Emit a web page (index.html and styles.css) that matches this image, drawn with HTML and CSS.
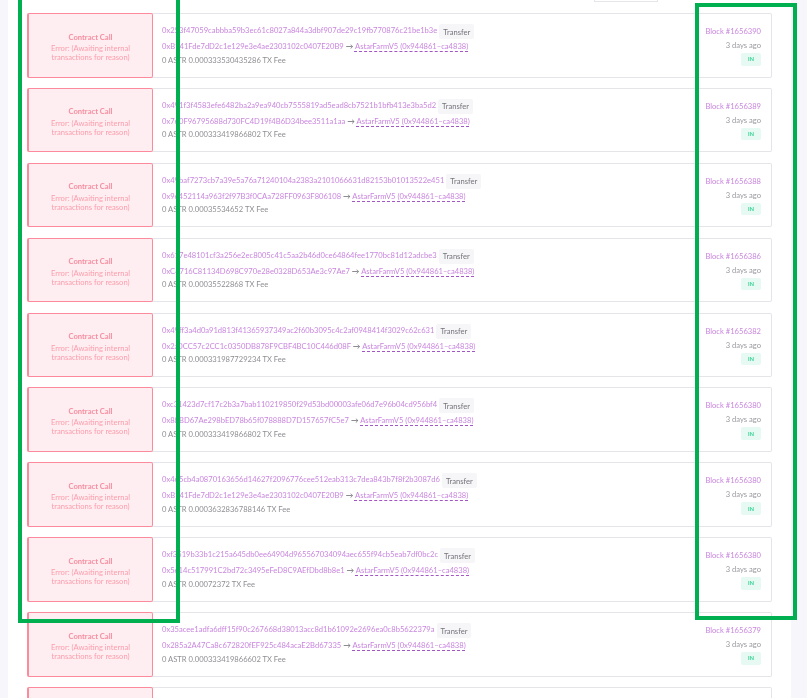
FILE: index.html
```html
<!DOCTYPE html>
<html lang="en">
<head>
<meta charset="utf-8">
<title>Transactions</title>
<link rel="stylesheet" href="styles.css">
</head>
<body>
<main class="page">
  <div class="toolbar"><div class="pager"></div></div>
  <section class="list">
    <article class="card">
      <div class="status"><div class="status-title">Contract Call</div><div class="status-error">Error: (Awaiting internal transactions for reason)</div></div>
      <div class="details">
        <div class="hash-row"><span class="link hash">0x253f47059cabbba59b3ec61c8027a844a3dbf907de29c19fb770876c21be1b3e</span><span class="tag">Transfer</span></div>
        <div class="address-row"><span class="link">0xB141Fde7dD2c1e129e3e4ae2303102c0407E20B9</span> <span class="arrow">→</span> <span class="link contract">AstarFarmV5 (0x944861–ca4838)</span></div>
        <div class="fee">0 ASTR 0.000333530435286 TX Fee</div>
      </div>
      <div class="meta"><div class="link block">Block #1656390</div><div class="age">3 days ago</div><div class="dir">IN</div></div>
    </article>
    <article class="card">
      <div class="status"><div class="status-title">Contract Call</div><div class="status-error">Error: (Awaiting internal transactions for reason)</div></div>
      <div class="details">
        <div class="hash-row"><span class="link hash">0x491f3f4583efe6482ba2a9ea940cb7555819ad5ead8cb7521b1bfb413e3ba5d2</span><span class="tag">Transfer</span></div>
        <div class="address-row"><span class="link">0x760F96795688d730FC4D19f4B6D34bee3511a1aa</span> <span class="arrow">→</span> <span class="link contract">AstarFarmV5 (0x944861–ca4838)</span></div>
        <div class="fee">0 ASTR 0.000333419866802 TX Fee</div>
      </div>
      <div class="meta"><div class="link block">Block #1656389</div><div class="age">3 days ago</div><div class="dir">IN</div></div>
    </article>
    <article class="card">
      <div class="status"><div class="status-title">Contract Call</div><div class="status-error">Error: (Awaiting internal transactions for reason)</div></div>
      <div class="details">
        <div class="hash-row"><span class="link hash">0x49baf7273cb7a39e5a76a71240104a2383a2101066631d82153b01013522e451</span><span class="tag">Transfer</span></div>
        <div class="address-row"><span class="link">0x9e452114a963f2f97B3f0CAa728FF0963F806108</span> <span class="arrow">→</span> <span class="link contract">AstarFarmV5 (0x944861–ca4838)</span></div>
        <div class="fee">0 ASTR 0.00035534652 TX Fee</div>
      </div>
      <div class="meta"><div class="link block">Block #1656388</div><div class="age">3 days ago</div><div class="dir">IN</div></div>
    </article>
    <article class="card">
      <div class="status"><div class="status-title">Contract Call</div><div class="status-error">Error: (Awaiting internal transactions for reason)</div></div>
      <div class="details">
        <div class="hash-row"><span class="link hash">0x617e48101cf3a256e2ec8005c41c5aa2b46d0ce64864fee1770bc81d12adcbe3</span><span class="tag">Transfer</span></div>
        <div class="address-row"><span class="link">0xC4716C81134D698C970e28e0328D653Ae3c97Ae7</span> <span class="arrow">→</span> <span class="link contract">AstarFarmV5 (0x944861–ca4838)</span></div>
        <div class="fee">0 ASTR 0.00035522868 TX Fee</div>
      </div>
      <div class="meta"><div class="link block">Block #1656386</div><div class="age">3 days ago</div><div class="dir">IN</div></div>
    </article>
    <article class="card">
      <div class="status"><div class="status-title">Contract Call</div><div class="status-error">Error: (Awaiting internal transactions for reason)</div></div>
      <div class="details">
        <div class="hash-row"><span class="link hash">0x49ff3a4d0a91d813f41365937349ac2f60b3095c4c2af0948414f3029c62c631</span><span class="tag">Transfer</span></div>
        <div class="address-row"><span class="link">0x2a0CC57c2CC1c0350DB878F9CBF4BC10C446d08F</span> <span class="arrow">→</span> <span class="link contract">AstarFarmV5 (0x944861–ca4838)</span></div>
        <div class="fee">0 ASTR 0.000331987729234 TX Fee</div>
      </div>
      <div class="meta"><div class="link block">Block #1656382</div><div class="age">3 days ago</div><div class="dir">IN</div></div>
    </article>
    <article class="card">
      <div class="status"><div class="status-title">Contract Call</div><div class="status-error">Error: (Awaiting internal transactions for reason)</div></div>
      <div class="details">
        <div class="hash-row"><span class="link hash">0xc31423d7cf17c2b3a7bab110219850f29d53bd00003afe06d7e96b04cd956bf4</span><span class="tag">Transfer</span></div>
        <div class="address-row"><span class="link">0x88BD67Ae298bED78b65f078888D7D157657fC5e7</span> <span class="arrow">→</span> <span class="link contract">AstarFarmV5 (0x944861–ca4838)</span></div>
        <div class="fee">0 ASTR 0.000333419866802 TX Fee</div>
      </div>
      <div class="meta"><div class="link block">Block #1656380</div><div class="age">3 days ago</div><div class="dir">IN</div></div>
    </article>
    <article class="card">
      <div class="status"><div class="status-title">Contract Call</div><div class="status-error">Error: (Awaiting internal transactions for reason)</div></div>
      <div class="details">
        <div class="hash-row"><span class="link hash">0x465cb4a0870163656d14627f2096776cee512eab313c7dea843b7f8f2b3087d6</span><span class="tag">Transfer</span></div>
        <div class="address-row"><span class="link">0xB141Fde7dD2c1e129e3e4ae2303102c0407E20B9</span> <span class="arrow">→</span> <span class="link contract">AstarFarmV5 (0x944861–ca4838)</span></div>
        <div class="fee">0 ASTR 0.0003632836788146 TX Fee</div>
      </div>
      <div class="meta"><div class="link block">Block #1656380</div><div class="age">3 days ago</div><div class="dir">IN</div></div>
    </article>
    <article class="card">
      <div class="status"><div class="status-title">Contract Call</div><div class="status-error">Error: (Awaiting internal transactions for reason)</div></div>
      <div class="details">
        <div class="hash-row"><span class="link hash">0xf3519b33b1c215a645db0ee64904d965567034094aec655f94cb5eab7df0bc2c</span><span class="tag">Transfer</span></div>
        <div class="address-row"><span class="link">0x5e14c517991C2bd72c3495eFeD8C9AEfDbd8b8e1</span> <span class="arrow">→</span> <span class="link contract">AstarFarmV5 (0x944861–ca4838)</span></div>
        <div class="fee">0 ASTR 0.00072372 TX Fee</div>
      </div>
      <div class="meta"><div class="link block">Block #1656380</div><div class="age">3 days ago</div><div class="dir">IN</div></div>
    </article>
    <article class="card">
      <div class="status"><div class="status-title">Contract Call</div><div class="status-error">Error: (Awaiting internal transactions for reason)</div></div>
      <div class="details">
        <div class="hash-row"><span class="link hash">0x35acee1adfa6dff15f90c267668d38013acc8d1b61092e2696ea0c8b5622379a</span><span class="tag">Transfer</span></div>
        <div class="address-row"><span class="link">0x285a2A47Ca8c672820fEF925c484acaE2Bd67335</span> <span class="arrow">→</span> <span class="link contract">AstarFarmV5 (0x944861–ca4838)</span></div>
        <div class="fee">0 ASTR 0.000333419866602 TX Fee</div>
      </div>
      <div class="meta"><div class="link block">Block #1656379</div><div class="age">3 days ago</div><div class="dir">IN</div></div>
    </article>
    <article class="card">
      <div class="status"></div>
      <div class="details"><div class="hash-row"><span class="tag tag-empty"></span></div></div>
    </article>
  </section>
</main>
<div class="mark mark-left"></div>
<div class="mark mark-right"></div>
</body>
</html>
```
FILE: styles.css
```css
* { box-sizing: border-box; }
html, body { margin: 0; height: 100%; overflow: hidden; }
body {
  background: #f7f7fb;
  font-family: "Lato", "Noto Sans", sans-serif;
  color: #8a8a90;
  font-size: 7.6px;
}
.page {
  margin-left: 8px;
  width: 783px;
  height: 698px;
  background: #fff;
  overflow: hidden;
  filter: blur(0.4px);
}
.toolbar { height: 13px; display: flex; justify-content: flex-end; padding-right: 133px; }
.pager { width: 64px; height: 2px; border: 1px solid #e6e6ea; border-top: 0; background: #fff; }
.list { display: flex; flex-direction: column; gap: 10.4px; padding: 0 19px; }
.card {
  display: flex;
  height: 64.5px;
  flex: none;
  border: 1px solid #e5e5e9;
  border-left: 0;
  border-radius: 2px;
}
.status {
  width: 126px;
  flex: none;
  margin: -1px 0;
  padding-top: 4px;
  background: #ffeef1;
  border: 1px solid #fb8b9c;
  border-left-width: 2px;
  border-radius: 2px;
  color: #fb9dac;
  text-align: center;
  display: flex;
  flex-direction: column;
  justify-content: center;
  line-height: 9px;
}
.status-title { font-weight: 700; color: #f58ea0; margin-bottom: 2.5px; }
.status-error { padding: 0 16px; }
.details { flex: 1; min-width: 0; padding: 10px 0 0 9px; display: flex; flex-direction: column; }
.hash-row { display: flex; align-items: flex-start; gap: 2px; height: 15px; white-space: nowrap; }
.link { color: #c986de; }
.hash { line-height: 12px; }
.tag {
  height: 15px;
  padding: 0 4px;
  display: flex;
  align-items: center;
  background: #f6f6f9;
  border-radius: 2px;
  color: #74747a;
}
.tag-empty { width: 34px; margin-left: 288px; }
.address-row { height: 9px; margin-top: 3px; line-height: 9px; white-space: nowrap; }
.arrow { color: #6a6a70; }
.contract { text-decoration: underline dashed #a455c4 1px; text-underline-offset: 2px; }
.fee { margin-top: 4.5px; line-height: 9px; color: #8f8f94; }
.meta { width: 100px; flex: none; padding: 13px 10px 0 0; display: flex; flex-direction: column; align-items: flex-end; }
.block { line-height: 9px; }
.age { line-height: 9px; margin-top: 5px; color: #9a9aa0; }
.dir {
  width: 20px;
  height: 12.5px;
  margin-top: 3px;
  border-radius: 2px;
  background: #e6faf3;
  color: #2fcf91;
  font-size: 5.5px;
  font-weight: 700;
  display: flex;
  align-items: center;
  justify-content: center;
}
.mark { position: absolute; border: 4px solid #00b050; }
.mark-left { left: 18px; top: -10px; width: 162px; height: 633px; }
.mark-right { left: 695px; top: 3px; width: 102px; height: 617px; }
```
